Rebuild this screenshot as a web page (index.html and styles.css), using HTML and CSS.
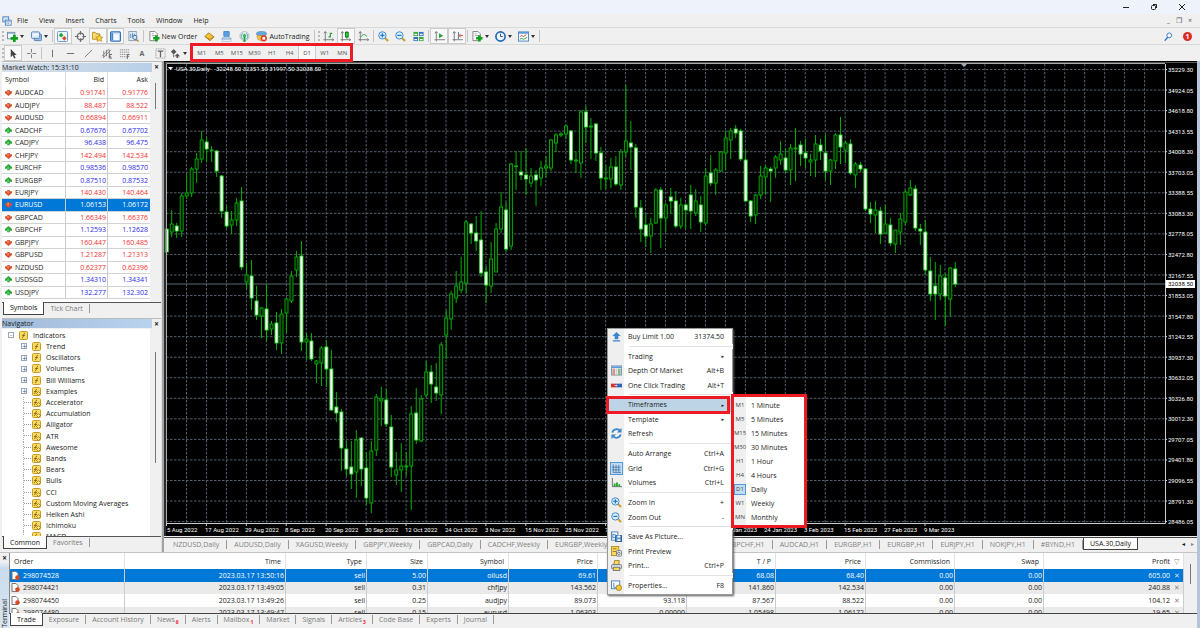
FILE: index.html
```
<!DOCTYPE html>
<html lang="en">
<head>
<meta charset="utf-8">
<title>USA.30,Daily</title>
<link rel="stylesheet" href="styles.css">
</head>
<body>
<svg class="defs" aria-hidden="true">
  <symbol id="app" viewBox="0 0 12 12"><rect x="1" y="1" width="7" height="6" fill="#cfe4f8" stroke="#3d78b8"/><rect x="4" y="5" width="7" height="6" fill="#fff" stroke="#3d78b8"/><path d="M5 7h5M6 10V8M8 10V8" stroke="#5b92cc"/></symbol>
  <symbol id="addchart" viewBox="0 0 12 12"><rect x=".5" y="1.500" width="8" height="7" fill="#f5faff" stroke="#6d8aa8"/><path d="M1 2.500h7" stroke="#7da6d2" /><path d="M8 4v8M4 8h8" stroke="#12a01c" stroke-width="3"/></symbol>
  <symbol id="windows" viewBox="0 0 12 12"><rect x="3.500" y="3.500" width="8" height="7" rx="1" fill="#9dbfe2" stroke="#4d7fb5"/><rect x=".5" y="1" width="9" height="7" rx="1" fill="#dcebf9" stroke="#4d7fb5"/><path d="M2 4h6" stroke="#fff"/></symbol>
  <symbol id="watch" viewBox="0 0 12 12"><rect x=".5" y=".5" width="11" height="11" rx="1" fill="#edf6ff" stroke="#5c93cc"/><path d="M4.500 2l2.500 2.500L4.500 7 2 4.500z" fill="#20a52c"/><path d="M8 5.500L10.500 8 8 10.500 5.500 8z" fill="#dd4a28"/></symbol>
  <symbol id="target" viewBox="0 0 12 12"><circle cx="6" cy="6" r="3.600" fill="none" stroke="#6c6c6c" stroke-width="1.300"/><path d="M6 0v4M6 8v4M0 6h4M8 6h4" stroke="#6c6c6c" stroke-width="1.300"/></symbol>
  <symbol id="folderstar" viewBox="0 0 12 12"><path d="M.5 1.500h3l1 1.500h4v6h-8z" fill="#f9d970" stroke="#b98e20"/><path d="M8 4l1.200 2.500 2.600.3-2 1.800.6 2.700L8 10l-2.400 1.300.6-2.700-2-1.800 2.600-.3z" fill="#ffd83a" stroke="#a97b10" stroke-width=".7"/></symbol>
  <symbol id="panel" viewBox="0 0 12 12"><rect x=".7" y="1" width="10.600" height="10" rx="1" fill="#f4f9ff" stroke="#2c6fb4" stroke-width="1.400"/><path d="M2.500 2v8" stroke="#4689cf" stroke-width="2"/><path d="M4 3h7" stroke="#b9d4ee"/></symbol>
  <symbol id="tester" viewBox="0 0 12 12"><rect x="1" y=".5" width="8" height="10" fill="#e8f1fa" stroke="#879bb0"/><path d="M3 3v5M5 2v5M7 3v5" stroke="#4d86be"/><circle cx="7.500" cy="7" r="2.300" fill="#d5ebff" stroke="#38679a"/><path d="M9 9l2.500 2.500" stroke="#b98a24" stroke-width="1.600"/></symbol>
  <symbol id="docplus" viewBox="0 0 12 12"><path d="M1 .5h5.500L9 3v7.500H1z" fill="#fff" stroke="#7e7e7e"/><path d="M3 3h2M3 5h4" stroke="#999"/><path d="M8 4.500v7M4.500 8h7" stroke="#12a01c" stroke-width="2.800"/></symbol>
  <symbol id="gold" viewBox="0 0 12 12"><path d="M1 6l4-4 6 4.500-4.500 4z" fill="#f2c33c" stroke="#a87714"/><path d="M1 6l5.500 3 4.500-3" fill="none" stroke="#b98a20"/></symbol>
  <symbol id="person" viewBox="0 0 12 12"><rect x="3" y="0" width="6" height="6" rx="1" fill="#5aa0e2" stroke="#2e71b0" stroke-width=".7"/><path d="M1 9c0-4 10-4 10 0z" fill="#b4d6f3" stroke="#5a90c3" stroke-width=".7"/><rect x="1" y="9" width="10" height="2.500" rx="1" fill="#e9eff5" stroke="#93aac0" stroke-width=".6"/></symbol>
  <symbol id="signal" viewBox="0 0 12 12"><circle cx="6" cy="5.500" r="5" fill="#dfe9ec" stroke="#a9bfca"/><path d="M4 2.500C2 4.500 2 7 4 9M8 2.500c2 2 2 4.500 0 6.500" fill="none" stroke="#6ba0c4"/><path d="M6 5v7" stroke="#23a434" stroke-width="2"/><circle cx="6" cy="5" r="1.700" fill="#36bd43"/></symbol>
  <symbol id="auto" viewBox="0 0 12 12"><ellipse cx="6" cy="3" rx="5.500" ry="2.500" fill="#64a9e0" stroke="#3878b2" stroke-width=".6"/><path d="M1 5h8l-3 6-4-2z" fill="#f3c63f" stroke="#ad8424" stroke-width=".6"/><circle cx="8.500" cy="8" r="3.400" fill="#e03820"/><path d="M7 6.500h3v3H7z" fill="#fff"/></symbol>
  <symbol id="bars" viewBox="0 0 12 12"><path d="M2.500 1v10.500M.5 9.500H12M1 2.500l1.500-2 1.500 2M10 8l1.500 1.500-1.500 1.500" stroke="#777" fill="none"/><path d="M6 6.500h2V2.500h2" stroke="#22a032" fill="none" stroke-width="1.300"/></symbol>
  <symbol id="candles" viewBox="0 0 12 12"><path d="M2.500 1v10.500M.5 9.500H12M1 2.500l1.500-2 1.500 2M10 8l1.500 1.500-1.500 1.500" stroke="#777" fill="none"/><path d="M7.500 0v8.500" stroke="#087c17"/><rect x="6" y="1.500" width="3" height="5" fill="#25d336" stroke="#087c17"/></symbol>
  <symbol id="line" viewBox="0 0 12 12"><path d="M2.500 1v10.500M.5 9.500H12M1 2.500l1.500-2 1.500 2M10 8l1.500 1.500-1.500 1.500" stroke="#777" fill="none"/><path d="M3 7c2-4 4-4 7-1" stroke="#22a032" fill="none"/></symbol>
  <symbol id="zin" viewBox="0 0 12 12"><path d="M7 7l4 4" stroke="#cca12c" stroke-width="2.200"/><circle cx="4.800" cy="4.800" r="4" fill="#d9efff" stroke="#3684c9"/><path d="M2.500 4.800h4.600M4.800 2.500v4.600" stroke="#2479c6" stroke-width="1.300"/></symbol>
  <symbol id="zout" viewBox="0 0 12 12"><path d="M7 7l4 4" stroke="#cca12c" stroke-width="2.200"/><circle cx="4.800" cy="4.800" r="4" fill="#d9efff" stroke="#3684c9"/><path d="M2.500 4.800h4.600" stroke="#2479c6" stroke-width="1.300"/></symbol>
  <symbol id="tile" viewBox="0 0 12 12"><rect x=".5" y="1" width="5" height="4.500" fill="#39a83d"/><rect x="6.500" y="1" width="5" height="4.500" fill="#3272bb"/><rect x=".5" y="6.500" width="5" height="4.500" fill="#3272bb"/><rect x="6.500" y="6.500" width="5" height="4.500" fill="#39a83d"/><path d="M1.500 3.800h3M7.500 3.800h3M1.500 9.300h3M7.500 9.300h3" stroke="#fff" stroke-width="1.400"/></symbol>
  <symbol id="scroll" viewBox="0 0 12 12"><path d="M2.500 1v10.500M.5 9.500H12M1 2.500l1.500-2 1.500 2" stroke="#777" fill="none"/><path d="M5.500 2.500l4.500 2.700-4.500 2.700z" fill="#25a235"/></symbol>
  <symbol id="shift" viewBox="0 0 12 12"><path d="M2.500 1v10.500M.5 9.500H12M1 2.500l1.500-2 1.500 2" stroke="#777" fill="none"/><path d="M7 1v8" stroke="#386da4"/><path d="M12 5H8M9.500 3L7.800 5l1.700 2" stroke="#d34b20" fill="none"/></symbol>
  <symbol id="clock" viewBox="0 0 12 12"><circle cx="6" cy="6" r="5" fill="#e9f5ff" stroke="#2168b5" stroke-width="1.800"/><path d="M6 3v3h2.500" stroke="#444" fill="none"/></symbol>
  <symbol id="template" viewBox="0 0 12 12"><rect x=".5" y="1" width="11" height="10" fill="#f8fbff" stroke="#4b80b7"/><path d="M1 2h10" stroke="#5c9bd8" stroke-width="2"/><path d="M2 6l2-1 2 1 3-2" stroke="#c05a38" fill="none"/><path d="M2 9l2-1 2 1 4-2" stroke="#2b9d3d" fill="none"/></symbol>
  <symbol id="cursor" viewBox="0 0 12 12"><path d="M3 1v9l2.200-2 1.500 3.500 1.600-.7L6.800 7.500H9.500z" fill="#444"/></symbol>
  <symbol id="cross" viewBox="0 0 12 12"><path d="M6 1v4M6 7v4M1 6h4M7 6h4" stroke="#777"/></symbol>
  <symbol id="vline" viewBox="0 0 12 12"><path d="M6 2v8" stroke="#666"/></symbol>
  <symbol id="hline" viewBox="0 0 12 12"><path d="M2 6h8" stroke="#666"/></symbol>
  <symbol id="tline" viewBox="0 0 12 12"><path d="M2 10l8-8" stroke="#777"/></symbol>
  <symbol id="channel" viewBox="0 0 12 12"><path d="M1 9l8-8M2 11l9-9M3 3v7M6 2v7M9 2v5" stroke="#666" stroke-width=".8"/><path d="M12 7H9v4h3M9 9h2" stroke="#555" fill="none"/></symbol>
  <symbol id="fibo" viewBox="0 0 12 12"><path d="M1 2h10M1 4.500h10M1 7h7M1 9.500h7" stroke="#888" stroke-dasharray="1.500 .7"/><path d="M11.500 7H9v5M9 9h2" stroke="#555" fill="none"/></symbol>
  <symbol id="labelbox" viewBox="0 0 12 12"><rect x="1" y="1" width="10" height="10" fill="none" stroke="#888" stroke-dasharray="1 1"/><path d="M3 3.500h6M6 3.500V10" stroke="#666" stroke-width="1.400"/></symbol>
  <symbol id="arrows" viewBox="0 0 12 12"><path d="M4 1l3 3-3 3-3-3zM8 6l3 3H9v2H7V9H5z" fill="#555"/><path d="M4 7v3" stroke="#555"/></symbol>
  <symbol id="search" viewBox="0 0 12 12"><path d="M5 7l-4 4.500" stroke="#3173c3" stroke-width="1.800"/><circle cx="7" cy="4.500" r="3.200" fill="#f5faff" stroke="#3173c3" stroke-width="1.200"/></symbol>
  <symbol id="dn" viewBox="0 0 8 8"><path d="M2.500 1h3v1.500H8v2L4 8 0 4.500v-2h2.500z" fill="#d7502f"/><path d="M3.500 2v3" stroke="#ffb18e"/></symbol>
  <symbol id="up" viewBox="0 0 8 8"><path d="M4 0l4 3.500v2H5.500V7h-3V5.500H0v-2z" fill="#2ba83a"/><path d="M3.500 3v3" stroke="#9bea9e"/></symbol>
  <symbol id="fx" viewBox="0 0 9 9"><rect x=".5" y=".5" width="8" height="8" rx="1" fill="#f8dc62" stroke="#c79b29"/><path d="M6 2C4 2 5 7 3 7M3 4.500h3" fill="none" stroke="#765b10" stroke-width=".8"/></symbol>
  <symbol id="fx2" viewBox="0 0 9 9"><rect x=".5" y=".5" width="8" height="8" rx="1" fill="#f8dc62" stroke="#c79b29"/><path d="M5 2C3 2 4 7 2 7M2 4.500h3" fill="none" stroke="#765b10" stroke-width=".8"/><path d="M6.500 4.500l2 2-2 2-2-2z" fill="#ffe36d" stroke="#96751a" stroke-width=".8"/></symbol>
  <symbol id="order" viewBox="0 0 9 9"><path d="M1 .5h4l2 2v6H1z" fill="#fff" stroke="#777"/><circle cx="6.500" cy="6.500" r="2.300" fill="#d84a24"/></symbol>
  <symbol id="buy" viewBox="0 0 12 12"><path d="M6 1l4.500 4.500H8V9H4V5.500H1.500zM2 10h8v1.500H2z" fill="#3c86cd"/></symbol>
  <symbol id="depth" viewBox="0 0 12 12"><rect x=".5" y="1" width="11" height="10" fill="#fff" stroke="#7894b4"/><path d="M1 2.500h10" stroke="#5999dc" stroke-width="2"/><path d="M3 4v7" stroke="#e58a76" stroke-width="3"/><path d="M9 4v7" stroke="#79bb7b" stroke-width="3"/><path d="M1 6h10M1 8.500h10M6 4v7" stroke="#b5bcc6" stroke-width=".7"/></symbol>
  <symbol id="oneclick" viewBox="0 0 12 12"><rect y="4" width="6" height="4" fill="#d63131"/><rect x="6" y="4" width="6" height="4" fill="#2b62bd"/><path d="M4 6h3" stroke="#dde"/></symbol>
  <symbol id="refresh" viewBox="0 0 12 12"><path d="M1.500 5C2 1 8 0 10 3.500M10.500 7C10 11 4 12 2 8.500" fill="none" stroke="#3b87c9" stroke-width="1.900"/><path d="M11.500 0v5h-5zM.5 12V7h5z" fill="#3b87c9"/></symbol>
  <symbol id="grid" viewBox="0 0 12 12"><path d="M2.500 1.500v9H11M5.500 2v8M8.500 2v8M1 4.500h9.500M1 7.500h9.500" stroke="#346a9b" stroke-width=".8" fill="none"/></symbol>
  <symbol id="vol" viewBox="0 0 12 12"><path d="M1.500 1v9.500H12" stroke="#666" fill="none"/><path d="M4 10V7M6.500 10V6M9 10V8" stroke="#18ad29" stroke-width="2"/></symbol>
  <symbol id="save" viewBox="0 0 12 12"><rect x=".5" y="1" width="7" height="9" fill="#f3f9ff" stroke="#4f81b5"/><path d="M2 3v5M2 4h3M2 7h3" stroke="#4688c9"/><rect x="5" y="5" width="6.500" height="6.500" fill="#5892ce" stroke="#285e98"/><path d="M7 5v2h3V5M7 11V9h3v2" fill="#fff"/></symbol>
  <symbol id="preview" viewBox="0 0 12 12"><rect x=".5" y=".5" width="8" height="10" fill="#f7da5b" stroke="#b28a21"/><path d="M2 3h4M2 6h4" stroke="#907020"/><rect x="6" y="5" width="5.500" height="6" rx="1" fill="#e3e8ed" stroke="#727b86"/><circle cx="8.500" cy="8" r="1.300" fill="#fff" stroke="#666"/></symbol>
  <symbol id="print" viewBox="0 0 12 12"><path d="M3 5l1-4.500h5L8.500 5z" fill="#f7da5b" stroke="#a68222"/><rect x=".5" y="5" width="11" height="4.500" rx="1" fill="#d8dde2" stroke="#6f7780"/><rect x="2.500" y="8" width="7" height="3.500" fill="#f7da5b" stroke="#777"/></symbol>
  <symbol id="props" viewBox="0 0 12 12"><rect x=".5" y="1" width="9" height="8.500" fill="#f3f9ff" stroke="#4f81b5"/><path d="M3 3v5h3" stroke="#4688c9" fill="none"/><circle cx="8.500" cy="8.500" r="3" fill="#f3c640" stroke="#ae8420"/></symbol>
</svg>

<header class="titlebar">
  <button class="winbtn" aria-label="Minimize"><svg viewBox="0 0 8 8"><path d="M1 4.500h6"/></svg></button>
  <button class="winbtn" aria-label="Restore"><svg viewBox="0 0 8 8"><rect x="1.500" y="2.500" width="4" height="4" rx="1"/><path d="M3 1.500h3.500V5"/></svg></button>
  <button class="winbtn" aria-label="Close"><svg viewBox="0 0 8 8"><path d="M1 1l6 6M7 1L1 7"/></svg></button>
</header>
<nav class="menubar">
  <svg class="i10"><use href="#app"/></svg>
  <button>File</button><button>View</button><button>Insert</button><button>Charts</button><button>Tools</button><button>Window</button><button>Help</button>
  <span class="mdi"><button aria-label="Minimize chart">_</button><button aria-label="Restore chart">❐</button><button aria-label="Close chart">×</button></span>
</nav>
<div class="toolbar" id="tb1"></div>
<div class="toolbar" id="tb2"></div>

<div class="work">
  <main class="main">
    <aside class="side">
      <section class="panel market">
        <h2 class="ptitle"><span>Market Watch: 15:31:10</span><button aria-label="Close Market Watch">×</button></h2>
        <div class="pbody">
          <table class="quotes"><thead><tr><th>Symbol</th><th>Bid</th><th>Ask</th></tr></thead><tbody id="quotes"></tbody></table>
          <div class="sb"><i class="thumb"></i></div>
        </div>
        <div class="tabs"><button class="on">Symbols</button><button>Tick Chart</button></div>
      </section>
      <section class="panel navigator">
        <h2 class="ptitle blue"><span>Navigator</span><button aria-label="Close Navigator">×</button></h2>
        <div class="pbody">
          <ul class="tree" id="tree"></ul>
          <div class="sb low"><i class="thumb tall"></i></div>
        </div>
        <div class="tabs"><button class="on">Common</button><button>Favorites</button></div>
      </section>
    </aside>
    <section class="chartcol">
      <svg class="chart" id="chart" role="img" aria-label="USA.30 daily candles"></svg>
      <div class="ctabs" id="ctabs"></div>
    </section>
  </main>
  <section class="terminal">
    <div class="tside"><button aria-label="Close Terminal">×</button><span>Terminal</span></div>
    <div class="tmain">
      <div class="tscroll">
        <table class="orders">
          <colgroup id="ocols"></colgroup>
          <thead><tr><th>Order</th><th>Time</th><th>Type</th><th>Size</th><th>Symbol</th><th>Price</th><th>S / L</th><th>T / P</th><th>Price</th><th>Commission</th><th>Swap</th><th>Profit<span class="xx">▽</span></th></tr></thead>
          <tbody id="orders"></tbody>
        </table>
        <div class="sb"><i class="thumb short"></i></div>
      </div>
      <div class="tabs ttabs"><button class="on">Trade</button><button>Exposure</button><button>Account History</button><button>News<sub>6</sub></button><button>Alerts</button><button>Mailbox<sub>1</sub></button><button>Market</button><button>Signals</button><button>Articles<sub>3</sub></button><button>Code Base</button><button>Experts</button><button>Journal</button></div>
    </div>
  </section>
</div>
<div class="mark mark-top"></div>
<div class="ctx" id="ctx"></div>
<div class="mark mark-item"></div>
<div class="ctx sub" id="sub"></div>
<script src="app.js"></script>
</body>
</html>
```
FILE: styles.css
```
* { box-sizing: border-box; }
body { margin: 0; height: 100vh; display: flex; flex-direction: column; position: relative; overflow: hidden; background: #f0f0f0; color: #1c1c1c; font: 7px/9px "Open Sans", "Noto Sans", sans-serif; }
button { font: inherit; color: inherit; border: 0; background: none; padding: 0; margin: 0; }
svg { display: block; }
.defs { position: absolute; width: 0; height: 0; }
.i10 { width: 10px; height: 10px; flex: none; }
.titlebar { flex: 0 0 14px; display: flex; justify-content: flex-end; align-items: center; gap: 20px; padding: 0 14px; background: #edf2fb; }
.winbtn svg { width: 8px; height: 8px; fill: none; stroke: #222; }
.menubar { flex: 0 0 13px; display: flex; align-items: center; gap: 11px; padding: 0 8px 0 2px; }
.menubar .i10 { margin-right: -6px; }
.mdi { margin-left: auto; display: flex; gap: 6px; color: #555; }
.toolbar { flex: 0 0 17px; display: flex; align-items: stretch; border-top: 1px solid #d9d9d9; }
.grip { width: 2px; margin: 3px 0 3px 2px; border-left: 2px dotted #bbb; }
.grp { display: flex; flex: none; }
.grp button { flex: 1 1 0; display: flex; align-items: center; justify-content: center; gap: 2px; white-space: nowrap; border: 1px solid transparent; }
.grp button.down { background: #f8f8f8; border-color: #ccc; }
.grp svg { width: 11px; height: 11px; flex: none; }
.caret::after { content: ""; border: 2px solid transparent; border-top: 3px solid #333; border-bottom: 0; }
.sep { width: 1px; margin: 2px 1px; background: #c4c4c4; }
.w36 { width: 36px; } .w47 { width: 47px; } .w52 { width: 52px; } .w56 { width: 56px; } .w60 { width: 60px; } .w69 { width: 69px; } .w88 { width: 88px; } .w158 { width: 158px; } .w184 { width: 184px; }
.frames { font-size: 6px; color: #555; margin-left: 5px; }
.letter { font-weight: 700; color: #666; }
.alerts { margin-left: auto; display: flex; align-items: center; gap: 10px; padding-right: 8px; }
.alerts svg { width: 9px; height: 9px; }
.badge { width: 9px; height: 9px; border-radius: 5px; background: #dd2a25; color: #fff; text-align: center; font-weight: 700; }

.work { flex: 1; min-height: 0; display: flex; flex-direction: column; border-right: 3px solid #b4c5d8; }
.main { flex: 1; min-height: 0; display: flex; }
.side { flex: 0 0 164px; display: flex; flex-direction: column; gap: 2px; padding-left: 2px; border-right: 2px solid #a3a3a3; }
.panel { display: flex; flex-direction: column; min-height: 0; border-right: 1px solid #ddd; border-top: 1px solid #bbb; }
.market { flex: 252 1 0; }
.navigator { flex: 232 1 0; }
.ptitle { margin: 0; flex: 0 0 10px; display: flex; align-items: center; font: inherit; }
.ptitle span { flex: 1; background: linear-gradient(90deg, #d6e0ea, #b9d0e8); }
.ptitle.blue span { background: linear-gradient(90deg, #9fb9d8, #b9d3ef); }
.ptitle button { width: 9px; font-weight: 700; font-size: 8px; line-height: 8px; }
.pbody { flex: 1; min-height: 0; display: flex; background: #fff; overflow: hidden; border-bottom: 1px solid #555; }
.sb { flex: 0 0 11px; background: #f0f0f0; padding-left: 5px; }
.thumb { display: block; width: 1px; height: 26px; margin-top: 11px; background: #777; }
.low .thumb { margin-top: 23px; }
.thumb.tall { height: 111px; }
.thumb.short { height: 20px; }
table { border-collapse: separate; border-spacing: 0; table-layout: fixed; }
.quotes { flex: 1; height: 227px; }
.quotes th { height: 15px; font-weight: 400; text-align: right; padding: 0 3px; border-right: 1px solid #ddd; }
.quotes th:first-child { text-align: left; width: 64px; }
.quotes th:nth-child(2) { width: 42px; }
.quotes td { padding: 0 1px 0 0; text-align: right; border-bottom: 1px solid #d2d2d2; border-right: 1px solid #ccc; line-height: 9px; }
.quotes td:last-child, .quotes th:last-child { border-right: 0; padding-right: 2px; }
.cell { display: flex; align-items: center; gap: 3px; padding-left: 3px; }
.cell svg { width: 7px; height: 7px; }
.neg { color: #f62f2f; }
.pos { color: #2929ee; }
.sel td { background: #0078d7; color: #fff; }
.tabs { flex: 0 0 15px; display: flex; align-items: flex-start; padding-left: 1px; color: #7b7b7b; }
.market .tabs { flex-basis: 13px; }
.tabs button { padding: 0 6px; margin-top: 1px; border-right: 1px solid #999; line-height: 9px; height: 9px; }
.tabs button.on { height: 13px; margin-top: -1px; padding-top: 1px; background: #fff; color: #111; border: 1px solid #444; border-top: 0; line-height: 10px; }
.tabs sub { color: #f02020; font-size: 5px; line-height: 0; margin-left: 1px; font-weight: 700; }
.tree { flex: 1 1 0; list-style: none; margin: 0; padding: 1px 0 0 3px; display: grid; grid-auto-rows: 1fr; height: 214px; }
.tree li { display: flex; align-items: center; gap: 5px; padding-left: 27px; position: relative; }
.tree li.root { padding-left: 3px; }
.tree li.fold { padding-left: 16px; }
.tree svg { width: 9px; height: 9px; flex: none; }
.tree li.leaf::before { content: ""; position: absolute; left: 19px; top: 5px; width: 7px; border-top: 1px dotted #999; }
.tree li.leaf::after { content: ""; position: absolute; left: 18px; top: 0; bottom: 0; border-left: 1px dotted #aaa; }
.tree i { width: 6px; height: 6px; border: 1px solid #9aa6b4; background: #fff; font: 6px/4px "DejaVu Sans", sans-serif; text-align: center; color: #2c5c9a; }

.chartcol { flex: 1; min-width: 0; display: flex; flex-direction: column; }
.chart { flex: 1; min-height: 0; width: 100%; background: #000; }
.chart text { font: 6px Roboto, "Open Sans", sans-serif; fill: #fff; }
.chart .now { fill: #000; }
.ctabs { flex: 0 0 15px; display: flex; align-items: center; border-top: 1px solid #444; padding: 0 3px 1px 2px; margin-top: 1px; color: #808080; overflow: hidden; }
.ctabs button { flex: none; padding: 0 7px; line-height: 9px; border-right: 1px solid #999; }
.ctabs button.push { margin-left: auto; }
.ctabs button.on { align-self: flex-start; height: 12px; background: #fff; color: #111; border: 1px solid #444; border-top: 0; padding: 0 6px; line-height: 12px; }
.ctabs .nav { border: 0; padding: 0 0 0 6px; font-size: 6px; }
.ctabs .first { margin-left: 38px; color: #111; }

.terminal { flex: 0 0 76px; min-height: 0; display: flex; border-top: 1px solid #c4c4c4; }
.tside { flex: 0 0 9px; display: flex; flex-direction: column; align-items: center; background: linear-gradient(#f0f0f0 12%, #c9dced 20%, #d8e4f0); justify-content: space-between; }
.tside button { font-weight: 700; font-size: 8px; }
.tside span { writing-mode: vertical-rl; transform: rotate(180deg); }
.tmain { flex: 1; min-width: 0; min-height: 0; display: flex; flex-direction: column; }
.tscroll { flex: 1; min-height: 0; overflow: hidden; display: flex; align-items: flex-start; background: #fff; border-bottom: 1px solid #444; border-left: 1px solid #888; }
.tscroll .sb { align-self: stretch; flex-basis: 13px; padding-left: 6px; }
.orders { flex: 1; height: 66px; }
.orders th { height: 16px; padding: 0 4px; font-weight: 400; text-align: right; border-right: 1px solid #e2e2e2; }
.orders td { padding: 0 1px 0 0; text-align: right; border-right: 1px solid #ccc; line-height: 9px; }
.orders th:first-child { text-align: left; }
.orders td:first-child .cell { padding-left: 1px; }
.orders .cell svg { width: 9px; height: 9px; }
.orders tbody tr:nth-child(even) td { background: #eaeaea; }
.orders th:last-child, .orders td:last-child { padding-right: 0; }
.xx { display: inline-block; width: 13px; text-align: center; color: #888; }
.sel .xx { color: #cde; }
.ttabs { flex: 0 0 14px; }

.mark { position: absolute; border: 3px solid #ed1c24; }
.mark-top { left: 190px; top: 43px; width: 163px; height: 19px; }
.mark-item { left: 606px; top: 396px; width: 124px; height: 18px; }
.ctx { position: absolute; left: 607px; top: 328px; width: 126px; height: 267px; display: flex; flex-direction: column; padding: 0 1px 1px; background: linear-gradient(90deg, #efefef 16px, #fff 16px); border: 1px solid #999; box-shadow: 1px 1px 2px #555; }
.ctx button { flex: 11 1 0; min-height: 0; display: grid; grid-template-columns: 14px 1fr auto; column-gap: 5px; align-items: center; text-align: left; padding: 0 7px 0 0; }
.ctx button > :first-child { justify-self: center; }
.ctx svg { width: 11px; height: 11px; }
.ctx hr { flex: 4 1 0; width: 104px; margin: 0 0 0 20px; border: 0; background: linear-gradient(#fff 2px, #e2e2e2 2px, #e2e2e2 3px, #fff 3px); }
.ctx button.hot { background: #bdd3e6; }
.ctx button.chk svg { background: #c3dcf2; outline: 1px solid #4f9ad8; }
.arrow { font: 5px/9px "DejaVu Sans", sans-serif; }
.ctx.sub { left: 731px; top: 394px; width: 76px; height: 134px; padding: 1px 0 0; border: 3px solid #ed1c24; box-shadow: none; background: linear-gradient(90deg, #efefef 12px, #fff 12px); }
.sub button { grid-template-columns: 12px 1fr; column-gap: 5px; padding: 0; }
.sub b { font-weight: 400; font-size: 6px; color: #444; }
.sub .chk b { background: #c3dcf2; outline: 1px solid #4f9ad8; padding: 0 1px; }
```
FILE: app.js
```
const $ = id => document.getElementById(id);
const ico = n => `<svg><use href="#${n}"/></svg>`;
const btn = (n, c = "") => `<button class="${c}" aria-label="${n}">${ico(n)}</button>`;
const grp = (w, h) => `<div class="grp ${w}">${h}</div>`;
const sep = '<span class="sep"></span>';
const grip = '<span class="grip"></span>';

$("tb1").innerHTML = grip + grp("w47", btn("addchart", "caret") + btn("windows", "caret")) + sep +
  grp("w88", btn("watch", "down") + btn("target") + btn("folderstar", "down") + btn("panel", "down") + btn("tester")) + sep +
  grp("w56", `<button>${ico("docplus")}New Order</button>`) +
  grp("w52", btn("gold") + btn("person") + btn("signal")) +
  grp("w60", `<button>${ico("auto")}AutoTrading</button>`) + sep + grip +
  grp("w52", btn("bars") + btn("candles", "down") + btn("line")) + sep +
  grp("w52", btn("zin") + btn("zout") + btn("tile")) + sep +
  grp("w36", btn("scroll", "down") + btn("shift", "down")) + sep +
  grp("w69", btn("docplus", "caret") + btn("clock", "caret") + btn("template", "caret")) + sep +
  `<span class="alerts">${ico("search")}<span class="badge">1</span></span>`;

$("tb2").innerHTML = grip + grp("w184", btn("cursor", "down") + btn("cross") + sep + btn("vline") + btn("hline") + btn("tline") +
  btn("channel") + btn("fibo") + '<button class="letter">A</button>' + btn("labelbox") + btn("arrows", "caret")) +
  grp("w158 frames", ["M1", "M5", "M15", "M30", "H1", "H4", "D1", "W1", "MN"].map(t => `<button class="${t == "D1" ? "down" : ""}">${t}</button>`).join(""));

const quotes = `AUDCAD 0.91741 0.91776 d
AUDJPY 88.487 88.522 d
AUDUSD 0.66894 0.66911 d
CADCHF 0.67676 0.67702 u
CADJPY 96.438 96.475 u
CHFJPY 142.494 142.534 d
EURCHF 0.98536 0.98570 u
EURGBP 0.87510 0.87532 u
EURJPY 140.430 140.464 d
EURUSD 1.06153 1.06172 d
GBPCAD 1.66349 1.66376 d
GBPCHF 1.12593 1.12628 u
GBPJPY 160.447 160.485 d
GBPUSD 1.21287 1.21313 d
NZDUSD 0.62377 0.62396 d
USDSGD 1.34310 1.34341 u
USDJPY 132.277 132.302 u`.split("\n").map(l => l.split(" "));
$("quotes").innerHTML = quotes.map(([s, b, a, d]) => {
  const sel = s == "EURUSD", c = sel ? "" : d == "u" ? "pos" : "neg";
  return `<tr class="${sel ? "sel" : ""}"><td><div class="cell">${ico(d == "u" ? "up" : "dn")}${s}</div></td><td class="${c}">${b}</td><td class="${c}">${a}</td></tr>`;
}).join("");

const folders = ["Trend", "Oscillators", "Volumes", "Bill Williams", "Examples"];
const leaves = ["Accelerator", "Accumulation", "Alligator", "ATR", "Awesome", "Bands", "Bears", "Bulls", "CCI", "Custom Moving Averages", "Heiken Ashi", "Ichimoku", "MACD"];
$("tree").innerHTML = `<li class="root"><i>-</i>${ico("fx")}Indicators</li>` +
  folders.map((f, k) => `<li class="fold"><i>+</i>${ico(k == 4 ? "fx2" : "fx")}${f}</li>`).join("") +
  leaves.map(f => `<li class="leaf">${ico("fx2")}${f}</li>`).join("");

$("ctabs").innerHTML = ["NZDUSD,Daily", "AUDUSD,Daily", "XAGUSD,Weekly", "GBPJPY,Weekly", "GBPCAD,Daily", "CADCHF,Weekly", "EURGBP,Weekly"].map(t => `<button>${t}</button>`).join("") +
  ["GBPCHF,H1", "AUDCAD,H1", "EURGBP,H1", "EURGBP,H1", "EURJPY,H1", "NOKJPY,H1", "#BYND,H1"].map((t, k) => `<button class="${k ? "" : "push"}">${t}</button>`).join("") +
  '<button class="on">USA.30,Daily</button><button class="nav first">◂</button><button class="nav">▸</button>';

$("ocols").innerHTML = [115, 161, 81, 61, 81, 89, 89, 89, 90, 89, 89, 140].map(w => `<col style="width:${w / 11.74}%">`).join("");
$("orders").innerHTML = [
  "298074528|2023.03.17 13:50:16|sell|5.00|oilusd|69.61||68.08|68.40|0.00|0.00|605.00",
  "298074421|2023.03.17 13:49:05|sell|0.31|chfjpy|143.562||141.860|142.534|0.00|0.00|240.88",
  "298074450|2023.03.17 13:49:26|sell|0.25|audjpy|89.073|93.118|87.567|88.522|0.00|0.00|104.12",
  "298074480|2023.03.17 13:49:47|sell|0.15|eurusd|1.06303|0.00000|1.05498|1.06172|0.00|0.00|19.65"
].map((r, n) => `<tr class="${n ? "" : "sel"}">` + r.split("|").map((v, k) => k == 0 ? `<td><div class="cell">${ico("order")}${v}</div></td>` : `<td>${v}${k == 11 ? '<span class="xx">✕</span>' : ""}</td>`).join("") + "</tr>").join("");

const arrow = '<span class="arrow">▸</span>';
$("ctx").innerHTML = [["buy", "Buy Limit 1.00", "31374.50"], 0, ["", "Trading", arrow], ["depth", "Depth Of Market", "Alt+B"], ["oneclick", "One Click Trading", "Alt+T"], 0,
  ["", "Timeframes", arrow, "hot"], ["", "Template", arrow], ["refresh", "Refresh", ""], 0, ["", "Auto Arrange", "Ctrl+A"], ["grid", "Grid", "Ctrl+G", "chk"], ["vol", "Volumes", "Ctrl+L"], 0,
  ["zin", "Zoom In", "+"], ["zout", "Zoom Out", "-"], 0, ["save", "Save As Picture...", ""], ["preview", "Print Preview", ""], ["print", "Print...", "Ctrl+P"], 0, ["props", "Properties...", "F8"]
].map(r => r ? `<button class="${r[3] || ""}"><span>${r[0] ? ico(r[0]) : ""}</span><span>${r[1]}</span><span>${r[2]}</span></button>` : "<hr>").join("");
$("sub").innerHTML = [["M1", "1 Minute"], ["M5", "5 Minutes"], ["M15", "15 Minutes"], ["M30", "30 Minutes"], ["H1", "1 Hour"], ["H4", "4 Hours"], ["D1", "Daily"], ["W1", "Weekly"], ["MN", "Monthly"]]
  .map(r => `<button class="${r[0] == "D1" ? "chk" : ""}"><b>${r[0]}</b><span>${r[1]}</span></button>`).join("");

/* Each candle: wick top, body top, body bottom, wick bottom; a trailing d marks a falling day. */
const candles = `229,229,252,252d 210,224,232,237 223,226,231,238d 193,196,231,237 174,193,196,199 167,169,193,197 153,159,169,183 131,140,159,163 137,142,149,162d 146,150,150,162
150,151,171,177d 175,176,211,218d 206,212,226,228d 211,220,225,234 198,203,220,226 187,201,267,270d 263,275,282,289 260,276,298,310d 286,301,315,320d 307,308,316,338
284,309,330,341d 321,324,329,335 312,323,343,350d 309,314,343,354 298,299,313,333 271,276,301,303 251,257,270,277 241,256,342,351d 333,339,342,360 333,341,359,361d
360,361,364,383 346,348,363,386 340,347,369,387d 350,369,410,411d 392,407,413,422d 409,412,448,471d 441,449,469,476d 441,467,474,489d 430,440,472,498 437,438,469,486d
452,468,498,505d 441,451,503,513 394,397,450,456 387,399,401,426 389,400,424,427d 415,427,467,477d 452,470,475,485 443,466,470,492 452,466,467,476 406,414,466,510
388,413,440,444d 395,399,441,442 361,372,395,397 365,372,384,403d 363,387,393,401d 342,345,395,414 310,318,335,359 291,294,319,330 271,286,298,303 257,282,290,293
220,222,283,293 223,224,233,244d 216,233,241,251d 211,240,273,277d 266,272,285,303d 242,259,286,293 223,229,272,272 192,207,229,233 202,210,249,252d 163,164,246,250
151,166,166,190 151,172,175,180d 148,175,179,195d 168,176,183,187 170,175,180,206d 161,168,178,186 156,166,168,177 139,140,168,171 133,135,143,152 132,134,135,137
125,126,134,139 130,131,160,164d 152,160,161,173 110,112,163,178 106,112,127,143d 118,126,127,159 123,124,153,161d 147,153,178,190d 165,178,179,189 158,167,179,188
156,167,184,186d 149,152,185,190 85,141,152,157 121,143,147,170d 144,148,207,218d 200,208,229,242d 214,225,236,247d 218,224,236,253 188,190,223,224 187,190,218,248d
203,205,218,232 188,197,201,214d 191,201,226,228d 198,205,226,229 203,205,210,229d 185,195,211,229d 189,201,213,216 196,205,222,232d 168,176,223,225 155,173,183,186d
168,170,183,195 151,152,171,172 131,138,153,170 128,131,140,159 125,129,133,138d 129,131,159,161d 150,160,201,201d 200,201,216,222d 194,195,215,224 166,176,195,199
165,168,177,195 167,169,171,202d 155,157,168,178 141,154,160,165 148,158,170,173d 144,148,170,185 128,148,149,181 141,145,154,166d 139,153,158,168d 154,160,162,176
135,144,160,177 139,145,151,160d 134,153,171,180d 159,160,171,185 133,135,161,169 117,135,147,164d 141,143,150,163 139,144,173,175d 162,164,175,188 162,165,169,172d
168,169,209,211d 202,209,214,223d 201,210,215,233 207,211,234,244d 205,224,233,234 218,225,243,246d 230,230,244,253 213,219,232,245 190,192,222,225 180,188,195,196
185,189,228,231d 224,229,231,245d 220,232,270,275d 257,271,294,301d 262,286,294,320d 265,276,294,300 273,278,296,326d 267,268,299,317 262,269,284,287d`.split(/\s+/);
let s = '<g transform="translate(-164 -61)">';
for (let k = 0; k < 50; k++) { const x = 186.5 + 19.96 * k; if (x < 1164) s += `<path d="M${x} 64V523" stroke="#56616d" stroke-dasharray="2.500 1.500"/>`; }
for (let k = 0; k < 23; k++) s += `<path d="M166 ${69.5 + 20.55 * k}H1165" stroke="#56616d" stroke-dasharray="2.500 1.500"/><path d="M1165 ${69.5 + 20.55 * k}h2" stroke="#ddd"/>`;
s += '<path d="M166 284H1165" stroke="#5d6b78"/>';
candles.forEach((c, i) => {
  const [h, t, b, l] = c.split(",").map(parseFloat), x = 166.7 + 4.991 * i, d = c.endsWith("d");
  s += `<path d="M${x} ${h}V${t}M${x} ${b}V${l}" stroke="#00b000"/>`;
  s += `<rect x="${x - 1.5}" y="${t}" width="3" height="${Math.max(b - t, .6)}" fill="${d ? "#fff" : "#001800"}" stroke="${d ? "#30e030" : "#00b400"}" stroke-width=".9"/>`;
});
s += '<path d="M165 536V62.500H1197" fill="none" stroke="#555" stroke-width="1"/><path d="M166.500 523V63.500H1165" fill="none" stroke="#aaa"/><path d="M166 523.500H1165.500V64" fill="none" stroke="#ccc"/><path d="M961 64h6l-3 3z" fill="#9ab"/><path d="M168 67h5l-2.500 3z" fill="#fff"/>';
"5 Aug 2022|17 Aug 2022|29 Aug 2022|8 Sep 2022|20 Sep 2022|30 Sep 2022|12 Oct 2022|24 Oct 2022|3 Nov 2022|15 Nov 2022|25 Nov 2022|7 Dec 2022|19 Dec 2022|29 Dec 2022|12 Jan 2023|24 Jan 2023|3 Feb 2023|15 Feb 2023|27 Feb 2023|9 Mar 2023".split("|")
  .forEach((t, k) => { const x = 166.5 + 39.92 * k; s += `<path d="M${x} 523v3" stroke="#ccc"/><text x="${Math.round(x - (k ? 1 : 0))}" y="532">${t}</text>`; });
"35229.30 34924.05 34618.80 34313.55 34008.30 33703.05 33388.55 33083.30 32778.05 32472.80 32167.55 31853.05 31547.80 31242.55 30937.30 30632.05 30326.80 30012.30 29707.05 29401.80 29096.55 28791.30 28486.05".split(" ")
  .forEach((t, k) => { s += `<text x="1168" y="${Math.round(72 + 20.55 * k)}">${t}</text>`; });
s += '<rect x="1166" y="280" width="29" height="8" fill="#fff"/><text class="now" x="1168" y="286">32038.50</text><text x="176" y="71">USA.30,Daily</text><text x="216" y="71">32248.50 32351.50 31997.50 32038.50</text></g>';
$("chart").innerHTML = s;
```
